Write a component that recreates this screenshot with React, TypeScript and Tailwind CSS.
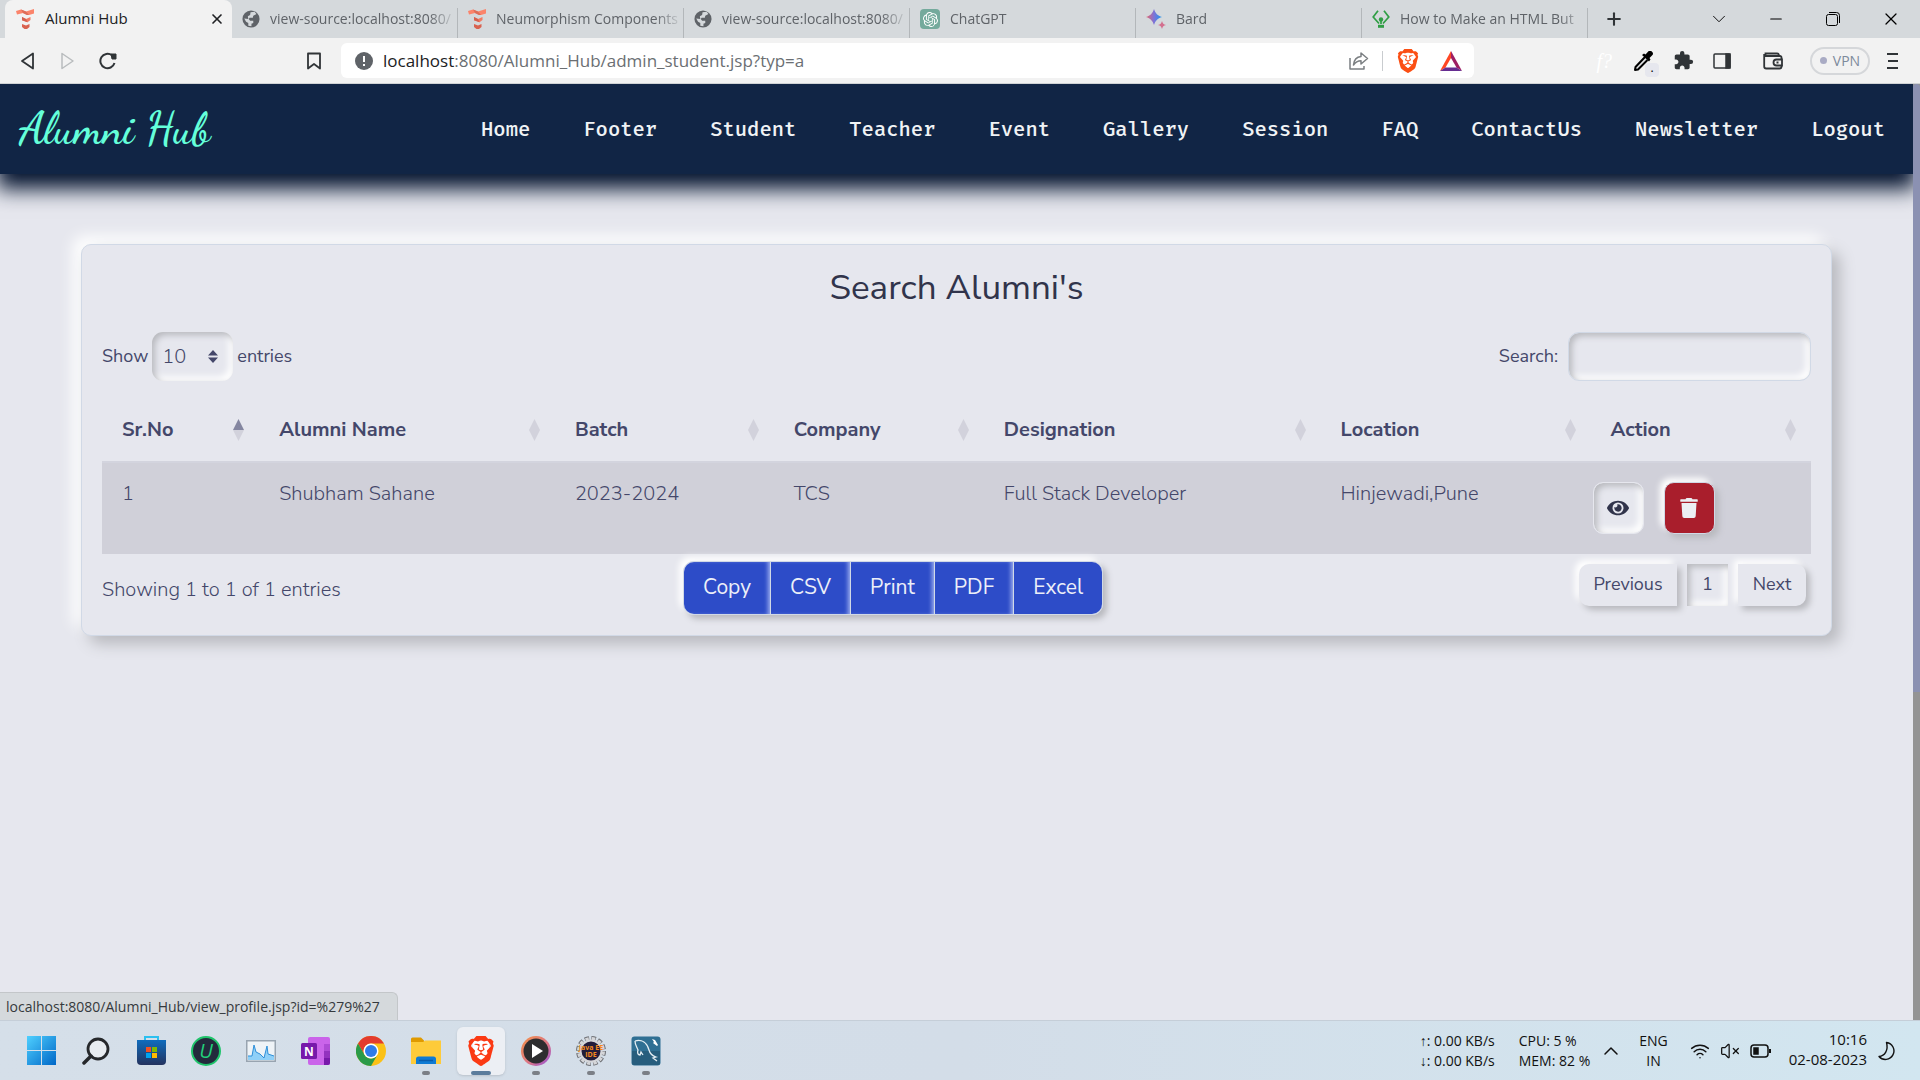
import React from "react";
import { SiBrave, SiOpenai } from "react-icons/si";
import { FaEye, FaTrash } from "react-icons/fa";
import { MdExtension } from "react-icons/md";
import { Wifi, VolumeX, X, Plus, ChevronDown, ChevronUp, Minus } from "lucide-react";

const soft = "shadow-[4px_4px_6px_#b8b9be,-4px_-4px_6px_#ffffff]";
const inset = "shadow-[inset_3px_3px_6px_#b8b9be,inset_-4px_-4px_7px_#ffffff]";

function Flame() {
  return (
    <svg viewBox="0 0 18 20" className="h-5 w-[18px] shrink-0">
      <path d="M0 2 5 .5l5 2L18 0v4.500L13 6h-2L7 4 1 5.500Z" fill="#fb846b" />
      <path d="m5 .5 5 2L13 6h-2L7 4Z" fill="#dd6d59" />
      <path d="m6 8 4 2 4.500-2v3l-3 2.200-5.500-2Z" fill="#f27a63" />
      <path d="m6 8 4 2 1.500 3.200-5.500-2Z" fill="#d5614f" />
      <path d="m6 15 4 1.500 3.500-1.500v3L11 20H8.500L6 18Z" fill="#d9624f" />
    </svg>
  );
}

function Globe() {
  return (
    <svg viewBox="0 0 20 20" className="size-[18px] shrink-0">
      <circle cx="10" cy="10" r="9.500" fill="#5f6368" />
      <path d="M9.500 2.500 14 2l2 2.500-3.500 2-.5 2H8.500L7.500 10l1.500 2h3.500v2.500l-2 .8V18L7 17.500v-3L4.500 13 2.500 9.500 7 10l-.5-3L9 5.500Z" fill="#d5d9dc" />
    </svg>
  );
}

function BardIcon() {
  return (
    <svg viewBox="0 0 20 20" className="size-5 shrink-0">
      <defs>
        <linearGradient id="bard" x1="0" x2="1">
          <stop offset="0" stopColor="#e8656a" />
          <stop offset=".5" stopColor="#7d73d8" />
          <stop offset="1" stopColor="#1a98ee" />
        </linearGradient>
      </defs>
      <path d="M8 0c1.500 4.500 3.500 6.500 8 8-4.500 1.500-6.500 3.500-8 8-1.500-4.500-3.500-6.500-8-8 4.500-1.500 6.500-3.500 8-8Z" fill="url(#bard)" />
      <path d="M16 12c.7 2.500 1.500 3.300 4 4-2.500.7-3.300 1.500-4 4-.7-2.500-1.500-3.300-4-4 2.500-.7 3.300-1.500 4-4Z" fill="#d3708f" />
    </svg>
  );
}

function PenIcon() {
  return (
    <svg viewBox="0 0 18 18" className="size-[18px] shrink-0" fill="none" stroke="#2f9e44" strokeWidth="1.700">
      <path d="M6 .8 1.200 7 7 13.500M12 .8 16.800 7 11 13.500" />
      <circle cx="9" cy="9.500" r="2.200" fill="#2f9e44" stroke="none" />
      <path d="M9 10v4" />
      <path d="M6 16.300h6" strokeWidth="3" />
    </svg>
  );
}

const tabs = [
  { icon: <Globe />, label: "view-source:localhost:8080/" },
  { icon: <Flame />, label: "Neumorphism Components" },
  { icon: <Globe />, label: "view-source:localhost:8080/" },
  {
    icon: (
      <span className="flex size-5 shrink-0 items-center justify-center rounded bg-[#74aa9c] text-white">
        <SiOpenai size={15} />
      </span>
    ),
    label: "ChatGPT",
  },
  { icon: <BardIcon />, label: "Bard" },
  { icon: <PenIcon />, label: "How to Make an HTML But" },
];

function TabStrip() {
  return (
    <div className="flex h-[38px] bg-[#d5d9dc] pl-[5px] text-sm text-[#5f6368]">
      <div className="flex w-[227px] items-center gap-[11px] rounded-t-lg bg-[#f2f2f2] pr-[7px] pl-[11px] text-[15px] text-[#202124]">
        <Flame />
        <span className="flex-1">Alumni Hub</span>
        <button aria-label="Close tab">
          <X size={16} strokeWidth={2.5} />
        </button>
      </div>
      {tabs.map((t, i) => (
        <div key={i} className="flex h-[38px] w-[226px] min-w-0 items-center gap-[10px] pl-[10px]">
          {t.icon}
          <span className="-mr-[10px] min-w-0 flex-1 [mask-image:linear-gradient(to_right,black_85%,transparent)] whitespace-nowrap">
            {t.label}
          </span>
          <span className="mt-2 h-[30px] w-px bg-[#b3b7ba]" />
        </div>
      ))}
      <button aria-label="New tab" className="ml-4 text-[#303437]">
        <Plus size={20} strokeWidth={2.5} />
      </button>
      <div className="flex flex-1 justify-end text-black">
        <button aria-label="Search tabs" className="flex w-[57px] items-center justify-center">
          <ChevronDown size={22} strokeWidth={1} />
        </button>
        <button aria-label="Minimize" className="flex w-[57px] items-center justify-center">
          <Minus size={18} strokeWidth={1.5} />
        </button>
        <button aria-label="Restore" className="flex w-[57px] items-center justify-center">
          <svg viewBox="0 0 14 14" className="size-[14px]" fill="none" stroke="currentColor">
            <rect x=".5" y="2.500" width="11" height="11" rx="2" />
            <path d="M3 .5h7.500a3 3 0 0 1 3 3V11" />
          </svg>
        </button>
        <button aria-label="Close" className="flex w-[59px] items-center justify-center">
          <X size={20} strokeWidth={1.5} />
        </button>
      </div>
    </div>
  );
}

function Toolbar() {
  return (
    <div className="flex h-[46px] items-center border-b border-[#d0d3d5] bg-[#f2f2f2] text-[#303437]">
      <button aria-label="Back" className="ml-5">
        <svg viewBox="0 0 16 18" className="h-[18px] w-4" fill="none" stroke="currentColor" strokeWidth="1.800" strokeLinejoin="round">
          <path d="M13 1.500v15L2 9Z" />
        </svg>
      </button>
      <button aria-label="Forward" className="ml-6 text-[#b9bcbe]">
        <svg viewBox="0 0 16 18" className="h-[18px] w-4" fill="none" stroke="currentColor" strokeWidth="1.500" strokeLinejoin="round">
          <path d="M2 1.500v15L13 9Z" />
        </svg>
      </button>
      <button aria-label="Reload" className="ml-[23px]">
        <svg viewBox="0 0 18 18" className="size-[18px]" fill="none" stroke="currentColor" strokeWidth="2">
          <path d="M15.500 11A7.200 7.200 0 1 1 13 3.300" />
          <path d="M12 2h5v5h-4Z" fill="currentColor" strokeWidth="1" strokeLinejoin="round" />
        </svg>
      </button>
      <button aria-label="Bookmark" className="ml-[190px]">
        <svg viewBox="0 0 14 18" className="h-[18px] w-[14px]" fill="none" stroke="currentColor" strokeWidth="1.800" strokeLinejoin="round">
          <path d="M1 1.500h12v15L7 12l-6 4.500Z" />
        </svg>
      </button>
      <div className="ml-5 flex h-[35px] w-[1133px] items-center rounded-md bg-white pr-3 pl-[14px]">
        <svg viewBox="0 0 18 18" className="size-[18px] shrink-0">
          <circle cx="9" cy="9" r="9" fill="#5f6368" />
          <path d="M9 4v6M9 12v2" stroke="#fff" strokeWidth="2" />
        </svg>
        <div className="ml-[10px] flex-1 text-[17px] text-[#6b6f73]">
          <span className="text-[#202124]">localhost</span>:8080/Alumni_Hub/admin_student.jsp?typ=a
        </div>
        <button aria-label="Share" className="text-[#7b7f82]">
          <svg viewBox="0 0 20 18" className="h-[18px] w-5" fill="none" stroke="currentColor" strokeWidth="1.500" strokeLinejoin="round">
            <path d="M1 6v11h14v-3" />
            <path d="M12 1l6.500 5.500L12 12V8.800C8.500 8.800 6.500 10 4.500 13 5 8 7.500 4.800 12 4.500Z" />
          </svg>
        </button>
        <span className="mx-[13px] h-5 w-px bg-[#c9cccf]" />
        <button aria-label="Brave Shields" className="text-[#fb4f14]">
          <SiBrave size={24} />
        </button>
        <button aria-label="Rewards" className="ml-5">
          <svg viewBox="0 0 22 20" className="h-5 w-[22px]">
            <path d="M11 0 0 20l5.500-3.500L11 7Z" fill="#ff4724" />
            <path d="m11 0 11 20-5.500-3.500L11 7Z" fill="#9e1f63" />
            <path d="M0 20h22l-5.500-3.500h-11Z" fill="#662d91" />
          </svg>
        </button>
      </div>
      <div className="flex flex-1 items-center justify-end pr-[21px]">
        <span className="mr-[21px] font-['Liberation_Serif'] text-xl text-white italic">f?</span>
        <button aria-label="Color picker" className="relative mr-5 text-black">
          <svg viewBox="0 0 20 20" className="size-5">
            <path d="m12 6-9.500 10L2 19l3-.5L14.500 9" fill="#dfe1e3" stroke="currentColor" strokeWidth="2" strokeLinejoin="round" />
            <path d="m9 4 2-1.500 1.500 1L15 .8a2.500 2.500 0 0 1 4 0 2.500 2.500 0 0 1 0 3.700L16.500 7l1 1.500L16 10.500Z" fill="currentColor" />
          </svg>
          <span className="absolute top-3 left-3 flex h-[14px] w-[14px] items-center justify-center rounded-sm bg-[#e6e7ee] pb-1 text-xs leading-3">.</span>
        </button>
        <button aria-label="Extensions" className="mr-[19px]">
          <MdExtension size={21} />
        </button>
        <button aria-label="Sidebar" className="mr-8">
          <svg viewBox="0 0 18 16" className="h-4 w-[18px]" fill="none" stroke="currentColor" strokeWidth="1.500">
            <rect x="1" y="1" width="16" height="14" rx="1" />
            <path d="M13 1h4v14h-4Z" fill="currentColor" />
          </svg>
        </button>
        <button aria-label="Wallet" className="mr-[27px]">
          <svg viewBox="0 0 20 18" className="h-[18px] w-5" fill="none" stroke="currentColor" strokeWidth="1.800">
            <path d="M18.500 7V5.500a1.500 1.500 0 0 0-1.500-1.500H2.500V1.500H14a2 2 0 0 1 2 2M1.200 2v12.500a2 2 0 0 0 2 2h13.300a2 2 0 0 0 2-2V13.500" />
            <path d="M19 7.500h-5.500a3 3 0 0 0 0 6H19ZM13.500 10.500h2" />
          </svg>
        </button>
        <button className="mr-[17px] flex h-7 w-[60px] items-center justify-center gap-[6px] rounded-full border-2 border-[#d5d7da] text-[14px] text-[#7d8a9c]">
          <span className="size-[7px] rounded-full bg-[#a9abc4]" />
          VPN
        </button>
        <button aria-label="Menu">
          <svg viewBox="0 0 12 18" className="h-[18px] w-3" stroke="currentColor" strokeWidth="2">
            <path d="M0 2h11M1 9h10M0 16h11" />
          </svg>
        </button>
      </div>
    </div>
  );
}

const links = ["Home", "Footer", "Student", "Teacher", "Event", "Gallery", "Session", "FAQ", "ContactUs", "Newsletter", "Logout"];

function NavBar() {
  return (
    <header className="flex h-[90px] items-center justify-between bg-[#112545] pr-[28px] pl-[19px] shadow-[0_12px_20px_3px_#061530]">
      <a href="#home" className="font-['Dancing_Script','Liberation_Serif',cursive] text-[44px] font-semibold text-[#64ffda]">
        Alumni Hub
      </a>
      <nav className="flex gap-[53px] pt-[2px] font-['Fira_Code','DejaVu_Sans_Mono',monospace] text-xl font-medium text-[#f0f3f5]">
        {links.map((l) => (
          <a key={l} href={"#" + l.toLowerCase()}>
            {l}
          </a>
        ))}
      </nav>
    </header>
  );
}

const columns = [
  { name: "Sr.No", value: "1", width: "w-[9.2%]" },
  { name: "Alumni Name", value: "Shubham Sahane", width: "w-[17.3%]" },
  { name: "Batch", value: "2023-2024", width: "w-[12.8%]" },
  { name: "Company", value: "TCS", width: "w-[12.3%]" },
  { name: "Designation", value: "Full Stack Developer", width: "w-[19.7%]" },
  { name: "Location", value: "Hinjewadi,Pune", width: "w-[15.8%]" },
  { name: "Action", value: "", width: "" },
];

function Sort({ active }: { active: boolean }) {
  return (
    <svg viewBox="0 0 11 22" className="h-[22px] w-[11px]">
      <path d="m5.500 0 5.500 11H0Z" fill={active ? "#8486a0" : "#d2d2dc"} />
      <path d="M5.500 22 0 11h11Z" fill="#d2d2dc" />
    </svg>
  );
}

function AlumniTable() {
  return (
    <table className="mt-[17px] w-full table-fixed text-left text-xl">
      <thead>
        <tr className="h-16">
          {columns.map((c, i) => (
            <th key={c.name} className={c.width + " pr-[15px] pl-5 font-bold"}>
              <button className="flex w-full items-center justify-between">
                {c.name}
                <Sort active={i === 0} />
              </button>
            </th>
          ))}
        </tr>
      </thead>
      <tbody>
        <tr className="h-[92px] border-t-2 border-[#d3d4de] bg-[#d0d0d9] align-top font-light">
          {columns.slice(0, 6).map((c) => (
            <td key={c.name} className="pt-[17px] pl-5 whitespace-nowrap">
              {c.value}
            </td>
          ))}
          <td className="pt-[19px] pl-[2px]">
            <div className="flex gap-5">
              <button aria-label="View profile" className={"flex h-[52px] w-[51px] items-center justify-center rounded-[10px] border border-[#e6e7ee] bg-[#e6e7ee] text-[#31344b] " + inset}>
                <FaEye size={22} />
              </button>
              <button aria-label="Delete" className={"flex h-[52px] w-[51px] items-center justify-center rounded-[10px] border border-[#d1d9e6] bg-[#a91e2c] text-[#eceff4] " + soft}>
                <FaTrash size={20} />
              </button>
            </div>
          </td>
        </tr>
      </tbody>
    </table>
  );
}

const exportsList = ["Copy", "CSV", "Print", "PDF", "Excel"];

function SearchCard() {
  return (
    <section className="mx-[81px] rounded-[10px] border border-[#d1d9e6] bg-[#e6e7ee] px-5 pb-5 text-[#44476a] shadow-[8px_8px_15px_#b8b9be,-8px_-8px_15px_#ffffff]">
      <h3 className="pt-5 text-center text-[35px] leading-[46px] font-normal text-[#31344b]">Search Alumni's</h3>
      <div className="mt-[21px] flex items-center justify-between text-[18px]">
        <label className="flex items-center gap-1">
          Show
          <span className="relative flex items-center">
            <select defaultValue="10" className={"h-[49px] w-[81px] appearance-none rounded-[11px] bg-[#e6e7ee] pl-[10px] text-xl font-light " + inset}>
              <option>10</option>
              <option>25</option>
              <option>50</option>
            </select>
            <svg viewBox="0 0 10 13" className="pointer-events-none absolute right-[15px] h-[13px] w-[10px]" fill="#44476a">
              <path d="m5 0 5 5.500H0ZM5 13 0 7.500h10Z" />
            </svg>
          </span>
          entries
        </label>
        <label className="flex items-center gap-[10px]">
          Search:
          <input type="search" className={"h-[49px] w-[243px] rounded-[11px] border border-[#d1d9e6] bg-[#e6e7ee] px-3 " + inset} />
        </label>
      </div>
      <AlumniTable />
      <div className="mt-[7px] grid grid-cols-[34%_1fr_auto] items-start">
        <p className="pt-[15px] text-xl font-light">Showing 1 to 1 of 1 entries</p>
        <div>
          <div className={"inline-flex overflow-hidden rounded-[11px] border border-[#d1d9e6] text-[21px] text-[#eceff8] " + soft}>
            {exportsList.map((b, i) => (
              <button
                key={b}
                className={
                  "h-[52px] bg-[#2d4cc8] px-[19px] " + (i < 4 ? "border-r border-[#d1d9e6] shadow-[inset_-4px_0_4px_-2px_#9fb0f0]" : "")
                }
              >
                {b}
              </button>
            ))}
          </div>
        </div>
        <div className="mt-[3px] mr-[5px] flex gap-[10px] text-[18px]">
          <button className={"h-[42px] w-[98px] rounded-l-[10px] bg-[#e6e7ee] pb-px " + soft}>Previous</button>
          <button className={"h-[42px] w-[41px] bg-[#e6e7ee] pb-px " + inset}>1</button>
          <button className={"h-[42px] w-[68px] rounded-r-[10px] bg-[#e6e7ee] pb-px " + soft}>Next</button>
        </div>
      </div>
    </section>
  );
}

const apps = [
  {
    name: "Start",
    icon: (
      <svg viewBox="0 0 29 29" className="size-[29px]">
        <defs>
          <linearGradient id="win" x1="0" y1="0" x2="1" y2="1">
            <stop offset="0" stopColor="#4fd0ff" />
            <stop offset="1" stopColor="#0067c7" />
          </linearGradient>
        </defs>
        <path d="M0 0h14v14H0ZM15 0h14v14H15ZM0 15h14v14H0ZM15 15h14v14H15Z" fill="url(#win)" />
      </svg>
    ),
  },
  {
    name: "Search",
    icon: (
      <svg viewBox="0 0 28 28" className="size-7" fill="none" stroke="#26282b" strokeLinecap="round">
        <circle cx="16" cy="12" r="10" strokeWidth="2.800" fill="#e8ecf0" />
        <path d="m9 19-7 7" strokeWidth="3.500" />
      </svg>
    ),
  },
  {
    name: "Store",
    icon: (
      <svg viewBox="0 0 29 29" className="size-[29px]">
        <defs>
          <linearGradient id="store" x1="0" y1="0" x2="0" y2="1">
            <stop offset="0" stopColor="#0f6cbd" />
            <stop offset="1" stopColor="#24335f" />
          </linearGradient>
        </defs>
        <path d="M8 5V1h13v4" fill="none" stroke="#2bc0f0" strokeWidth="2" />
        <path d="M0 4h29v21a4 4 0 0 1-4 4H4a4 4 0 0 1-4-4Z" fill="url(#store)" />
        <path d="M9 11h5v5H9Z" fill="#f25022" />
        <path d="M15 11h5v5h-5Z" fill="#7fba00" />
        <path d="M9 17h5v5H9Z" fill="#00a4ef" />
        <path d="M15 17h5v5h-5Z" fill="#ffb900" />
      </svg>
    ),
  },
  {
    name: "Uninstaller",
    icon: (
      <span className="flex size-[30px] items-center justify-center rounded-full border-2 border-[#1fc46b] bg-[#232a3c] text-xl leading-none text-[#22d07a] italic">
        U
      </span>
    ),
  },
  {
    name: "Performance monitor",
    icon: (
      <svg viewBox="0 0 30 22" className="h-[22px] w-[30px]">
        <rect x=".75" y=".75" width="28.500" height="20.500" fill="#eef3f7" stroke="#98a4b0" strokeWidth="1.500" />
        <path d="M2 20v-4l4 0 2-11 2 7 4 2 4 4 3-12 1 8 6 2v4Z" fill="#8fd0f8" />
        <path d="M2 16h4l2-11 2 7 4 2 4 4 3-12 1 8 6 2" fill="none" stroke="#2f8fd8" />
      </svg>
    ),
  },
  {
    name: "OneNote",
    icon: (
      <svg viewBox="0 0 30 28" className="h-7 w-[30px]">
        <rect x="7" width="22" height="28" rx="2" fill="#ca64ea" />
        <path d="M23 7h6v7h-6Z" fill="#ae4bd5" />
        <path d="M23 14h6v7h-6Z" fill="#9332bf" />
        <path d="M23 21h6v5a2 2 0 0 1-2 2h-4Z" fill="#7719aa" />
        <rect y="6" width="16" height="16" rx="1.500" fill="#7719aa" />
        <text x="8" y="18.500" textAnchor="middle" fontSize="12" fontWeight="700" fill="#fff">
          N
        </text>
      </svg>
    ),
  },
  {
    name: "Chrome",
    icon: (
      <svg viewBox="0 0 30 30" className="size-[30px]">
        <circle cx="15" cy="15" r="15" fill="#fbc116" />
        <path d="M2 7.500a15 15 0 0 1 26 0H15a7.500 7.500 0 0 0-6.500 11.200Z" fill="#e33b2e" />
        <path d="M2 7.500a15 15 0 0 0 13 22.500l6.500-11.300a7.500 7.500 0 0 1-13 0Z" fill="#2a9a48" />
        <circle cx="15" cy="15" r="7.500" fill="#fff" />
        <circle cx="15" cy="15" r="6" fill="#2f7be8" />
      </svg>
    ),
  },
  {
    name: "File Explorer",
    mark: "w-2 bg-[#7b7f86]",
    icon: (
      <svg viewBox="0 0 30 28" className="h-7 w-[30px]">
        <path d="M0 2a1.500 1.500 0 0 1 1.500-1.500H10l3 3v4H0Z" fill="#e09a00" />
        <path d="M0 5h12l2-1.500h16V27H0Z" fill="#fecb3a" />
        <path d="M5 27v-5a2.500 2.500 0 0 1 2.500-2.500h15A2.500 2.500 0 0 1 25 22v5Z" fill="#0f7bd4" />
        <path d="M8 23.500h14" stroke="#0a5cab" strokeWidth="1.500" />
      </svg>
    ),
  },
  {
    name: "Brave",
    active: true,
    mark: "w-5 bg-[#5b7c9c]",
    icon: (
      <span className="relative flex items-center justify-center">
        <span className="absolute h-5 w-4 rounded-b-full bg-white" />
        <SiBrave size={30} color="#fb3a14" className="relative" />
      </span>
    ),
  },
  {
    name: "Media Player",
    mark: "w-2 bg-[#7b7f86]",
    icon: (
      <svg viewBox="0 0 30 30" className="size-[30px]">
        <defs>
          <linearGradient id="media" x1="0" y1="0" x2="1" y2="1">
            <stop offset="0" stopColor="#f59247" />
            <stop offset=".6" stopColor="#d9748a" />
            <stop offset="1" stopColor="#8e4fe0" />
          </linearGradient>
        </defs>
        <circle cx="15" cy="15" r="15" fill="url(#media)" />
        <circle cx="15" cy="15" r="12.500" fill="#2d2d2f" />
        <path d="m11 8 11 7-11 7Z" fill="#fff" />
      </svg>
    ),
  },
  {
    name: "Eclipse",
    mark: "w-2 bg-[#7b7f86]",
    icon: (
      <svg viewBox="0 0 30 30" className="size-[30px]">
        <circle cx="15" cy="15" r="12.500" fill="none" stroke="#6d6f74" strokeWidth="5" strokeDasharray="4.300 2.250" />
        <circle cx="15" cy="15" r="12.500" fill="none" stroke="#d5d6d9" strokeWidth="3" strokeDasharray="3.300 3.250" strokeDashoffset="-.5" />
        <circle cx="15" cy="15" r="10.500" fill="#221c3a" stroke="#d5d6d9" strokeWidth="2" />
        <text x="15" y="14" textAnchor="middle" fontSize="7" fontWeight="700" fill="#f58a1f">
          Java EE
        </text>
        <text x="15" y="21" textAnchor="middle" fontSize="7" fontWeight="700" fill="#f58a1f">
          IDE
        </text>
      </svg>
    ),
  },
  {
    name: "MySQL Workbench",
    mark: "w-2 bg-[#7b7f86]",
    icon: (
      <svg viewBox="0 0 30 30" className="size-[30px]">
        <rect x=".5" y=".5" width="29" height="29" rx="3" fill="#2f6f93" />
        <path d="M1 15h28v12a2 2 0 0 1-2 2H3a2 2 0 0 1-2-2Z" fill="#275d7d" />
        <path d="M4 5c7-2 12 2 14 9 1 4 4 6 7 7l-3 1 4 3M4 5c0 4 2 6 3 9-1 3 0 5 2 5l1-3 2 3" fill="none" stroke="#e4edf3" strokeWidth="1.300" />
        <path d="m21 3 2 3-1 1 4 3 1-1-3-5Z" fill="#fff" />
      </svg>
    ),
  },
];

function Taskbar() {
  return (
    <footer className="flex h-[60px] items-center justify-between border-t border-[#c5ced8] bg-gradient-to-r from-[#d5dfe9] via-[#d3dde8] to-[#d2e6f0] pr-[24px] pl-[13px] leading-5 text-[#111]">
      <div className="flex">
        {apps.map((a) => (
          <button
            key={a.name}
            aria-label={a.name}
            className={
              "relative mr-[3px] ml-1 flex size-12 items-center justify-center rounded-md " + (a.active ? "bg-[#eceff4] shadow-sm" : "")
            }
          >
            {a.icon}
            {a.mark && <span className={"absolute bottom-0 h-1 rounded-full " + a.mark} />}
          </button>
        ))}
      </div>
      <div className="flex items-center text-[14px]">
        <div>
          ↑: 0.00 KB/s
          <br />
          ↓: 0.00 KB/s
        </div>
        <div className="ml-6">
          CPU: 5 %<br />
          MEM: 82 %
        </div>
        <ChevronUp size={24} strokeWidth={1.5} className="ml-[9px]" />
        <div className="ml-4 text-center">
          ENG
          <br />
          IN
        </div>
        <Wifi size={20} strokeWidth={1.8} className="ml-[22px]" />
        <VolumeX size={20} strokeWidth={1.5} className="ml-[10px]" />
        <svg viewBox="0 0 21 14" className="ml-[10px] h-[14px] w-[21px]" fill="none" stroke="currentColor" strokeWidth="1.500">
          <rect x="1" y="1" width="17" height="12" rx="3" />
          <path d="M4 4h4v6H4Z" fill="currentColor" />
          <path d="M20 5v4" strokeWidth="2" />
        </svg>
        <div className="ml-[18px] pb-[3px] text-right text-[15px]">
          10:16
          <br />
          02-08-2023
        </div>
        <svg viewBox="0 0 18 20" className="ml-[11px] h-5 w-[18px]" fill="none" stroke="currentColor" strokeWidth="1.400" strokeLinejoin="round">
          <path d="M8.500 1.500a8.500 8.500 0 1 1-7.500 14C7 15 10.500 9 8.500 1.500Z" />
        </svg>
      </div>
    </footer>
  );
}

export default function App() {
  return (
    <div className="flex min-h-screen flex-col bg-[#e6e7ee] font-['Segoe_UI','Open_Sans',sans-serif]">
      <TabStrip />
      <Toolbar />
      <div className="flex flex-1">
        <main className="flex min-w-0 flex-1 flex-col overflow-hidden font-['Nunito_Sans','Open_Sans',sans-serif]">
          <NavBar />
          <div className="flex-1 pt-[70px]">
            <SearchCard />
          </div>
          <div className="flex font-['Segoe_UI','Open_Sans',sans-serif]">
            <div className="h-7 rounded-tr-md border-t border-r border-[#c3c6c9] bg-[#d5d9dc] pr-[17px] pl-[6px] text-[14px] leading-7 text-[#35393d]">
              localhost:8080/Alumni_Hub/view_profile.jsp?id=%279%27
            </div>
          </div>
        </main>
        <div className="w-[7px] bg-[#949494]">
          <div className="h-[65%] rounded-t bg-[#8b91b2]" />
        </div>
      </div>
      <Taskbar />
    </div>
  );
}
